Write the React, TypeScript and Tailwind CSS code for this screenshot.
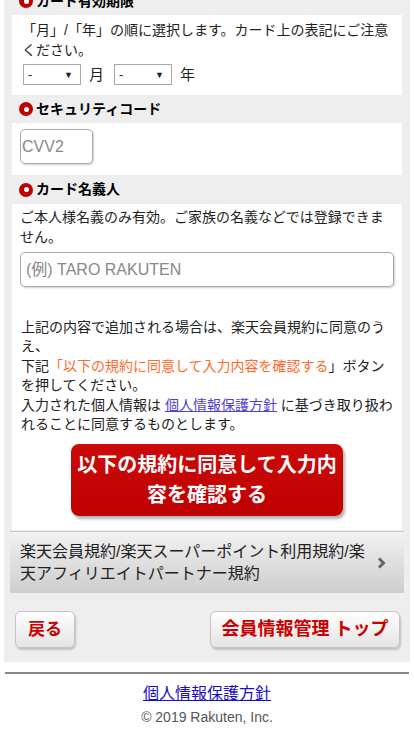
import React from 'react';

const jp = { fontFamily: '"Liberation Sans", "Noto Sans CJK JP", sans-serif' };

function RequiredMark() {
  return (
    <span className="inline-block w-[14px] h-[14px] rounded-full bg-[#bf0000] relative shrink-0">
      <span className="absolute left-[4.5px] top-[4.5px] w-[5px] h-[5px] rounded-full bg-white" />
    </span>
  );
}

function SectionHeader({ title, className = '' }: { title: string; className?: string }) {
  return (
    <div className={`bg-[#eeeeee] h-[28px] flex items-center gap-[3px] pl-[7px] ${className}`}>
      <RequiredMark />
      <span className="text-[14px] font-bold text-black">{title}</span>
    </div>
  );
}

function MonthSelect() {
  return (
    <div className="w-[58px] h-[21px] border border-[#a9a9a9] bg-white flex items-center justify-between pl-[4px] pr-[7px] text-[13px]">
      <span>-</span>
      <span className="text-[9px]">▼</span>
    </div>
  );
}

export default function App() {
  return (
    <div className="w-[414px] h-[736px] overflow-hidden bg-white text-[#222]" style={jp}>
      <div className="mx-[4px] bg-[#eeeeee] px-[8px] pb-[14px]">
        <div className="bg-white pb-[14px]">
          <SectionHeader title="カード有効期限" className="-mt-[13px]" />
          <div className="px-[10px] pt-[5px] text-[14px] leading-[20px]">
            <p>「月」/「年」の順に選択します。カード上の表記にご注意ください。</p>
            <div className="flex items-center mt-[4px] pl-[1px]">
              <MonthSelect />
              <span className="ml-[8px] mr-[10px] text-[15px]">月</span>
              <MonthSelect />
              <span className="ml-[8px] text-[15px]">年</span>
            </div>
          </div>

          <SectionHeader title="セキュリティコード" className="mt-[10px]" />
          <div className="px-[8px] pt-[6px]">
            <div className="w-[73px] h-[35px] rounded-[5px] border border-[#aaaaaa] shadow-[1px_1px_2px_rgba(0,0,0,0.2)] flex items-center pl-[1px]">
              <span className="text-[16px] text-[#888]" style={{ fontFamily: '"Liberation Sans", sans-serif' }}>CVV2</span>
            </div>
          </div>

          <SectionHeader title="カード名義人" className="mt-[11px] h-[29px]" />
          <div className="px-[8px] pt-[3px] text-[14px] leading-[20px]">
            <p>ご本人様名義のみ有効。ご家族の名義などでは登録できません。</p>
            <div className="mt-[5px] h-[35px] rounded-[5px] border border-[#aaaaaa] shadow-[1px_1px_2px_rgba(0,0,0,0.2)] flex items-center pl-[5px]">
              <span className="text-[16px] text-[#888]">(例) TARO RAKUTEN</span>
            </div>
          </div>

          <div className="px-[9px] pr-[8px] pt-[31px] text-[14px] leading-[19.4px]">
            <p>
              上記の内容で追加される場合は、楽天会員規約に同意のうえ、
              <br />
              下記<span className="text-[#ff6a2a]">「以下の規約に同意して入力内容を確認する</span>」ボタンを押してください。
              <br />
              入力された個人情報は{' '}
              <a href="#" className="text-[#5140d8] underline">個人情報保護方針</a>
              {' '}に基づき取り扱われることに同意するものとします。
            </p>
          </div>

          <div className="flex justify-center pt-[10px]">
            <button className="w-[272px] h-[72px] rounded-[8px] bg-gradient-to-b from-[#cc0a0a] to-[#bf0000] text-white font-bold text-[20px] leading-[30px] shadow-[2px_3px_3px_rgba(0,0,0,0.3)] px-[6px]">
              以下の規約に同意して入力内容を確認する
            </button>
          </div>
        </div>

        <div className="-mx-[2px] mt-[1px] h-[62px] border-t border-[#c8c8c8] bg-gradient-to-b from-[#f2f2f2] to-[#cdcdcd] flex items-center pl-[10px] pr-[18px]">
          <p className="flex-1 text-[16px] leading-[22px] text-[#222] pr-[4px]">
            楽天会員規約/楽天スーパーポイント利用規約/楽天アフィリエイトパートナー規約
          </p>
          <svg width="9" height="12" viewBox="0 0 9 12" className="shrink-0">
            <polyline points="2,1.5 6.5,6 2,10.5" fill="none" stroke="#666" strokeWidth="3" />
          </svg>
        </div>

        <div className="flex justify-between items-center mt-[18px] pl-[3px] pr-[2px]">
          <button className="w-[60px] h-[37px] rounded-[6px] border border-[#c4c4c4] bg-gradient-to-b from-white to-[#e4e4e4] shadow-[1px_2px_2px_rgba(0,0,0,0.2)] text-[#cc0000] font-bold text-[17px]">
            戻る
          </button>
          <button className="w-[190px] h-[37px] rounded-[6px] border border-[#c4c4c4] bg-gradient-to-b from-white to-[#e4e4e4] shadow-[1px_2px_2px_rgba(0,0,0,0.2)] text-[#cc0000] font-bold text-[18px]">
            会員情報管理 トップ
          </button>
        </div>
      </div>

      <div className="mx-[5px] mt-[10px] h-[2px] bg-[#888888]" />
      <div className="flex flex-col items-center pt-[8px]">
        <a href="#" className="text-[16px] leading-[24px] text-[#1a0dcc] underline">個人情報保護方針</a>
        <p className="text-[14px] leading-[20px] text-[#555] mt-[1px]" style={{ fontFamily: '"Liberation Sans", sans-serif' }}>
          © 2019 Rakuten, Inc.
        </p>
      </div>
    </div>
  );
}
